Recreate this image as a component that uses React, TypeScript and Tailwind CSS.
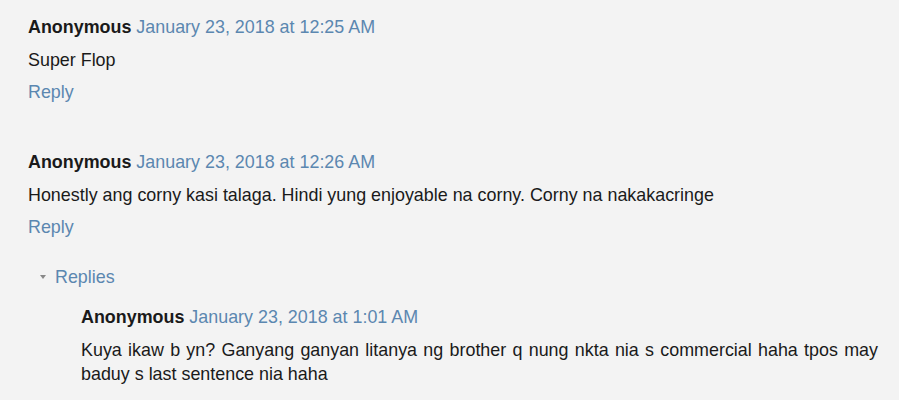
const link = "text-[#5b87b0]";

function Comment({ time, children, reply = true }: { time: string; children: React.ReactNode; reply?: boolean }) {
	return (
		<div className="flex flex-col">
			<div className="leading-6">
				<span className="font-bold text-[#1a1a1a]">Anonymous</span>{" "}
				<span className={link}>{time}</span>
			</div>
			<p className="mt-[9px] text-justify leading-6 text-[#1a1a1a]">{children}</p>
			{reply && <div className={`mt-2 leading-6 ${link}`}>Reply</div>}
		</div>
	);
}

export default function App() {
	return (
		<div className="h-[400px] w-[899px] overflow-hidden bg-[#f3f3f3] pl-7 pr-[21px] pt-[15px] font-['Liberation_Sans',Arial,sans-serif] text-[17.9px]">
			<Comment time="January 23, 2018 at 12:25 AM">Super Flop</Comment>
			<div className="mt-[46px]">
				<Comment time="January 23, 2018 at 12:26 AM">
					Honestly ang corny kasi talaga. Hindi yung enjoyable na corny. Corny na nakakacringe
				</Comment>
			</div>
			<div className="mt-[26px] flex items-center leading-6">
				<span className="ml-3 mr-[9px] h-0 w-0 border-x-[3.5px] border-t-[4px] border-x-transparent border-t-[#888]" />
				<span className={link}>Replies</span>
			</div>
			<div className="ml-[53px] mt-4">
				<Comment time="January 23, 2018 at 1:01 AM" reply={false}>
					Kuya ikaw b yn? Ganyang ganyan litanya ng brother q nung nkta nia s commercial haha tpos may baduy s last sentence nia haha
				</Comment>
			</div>
		</div>
	);
}
